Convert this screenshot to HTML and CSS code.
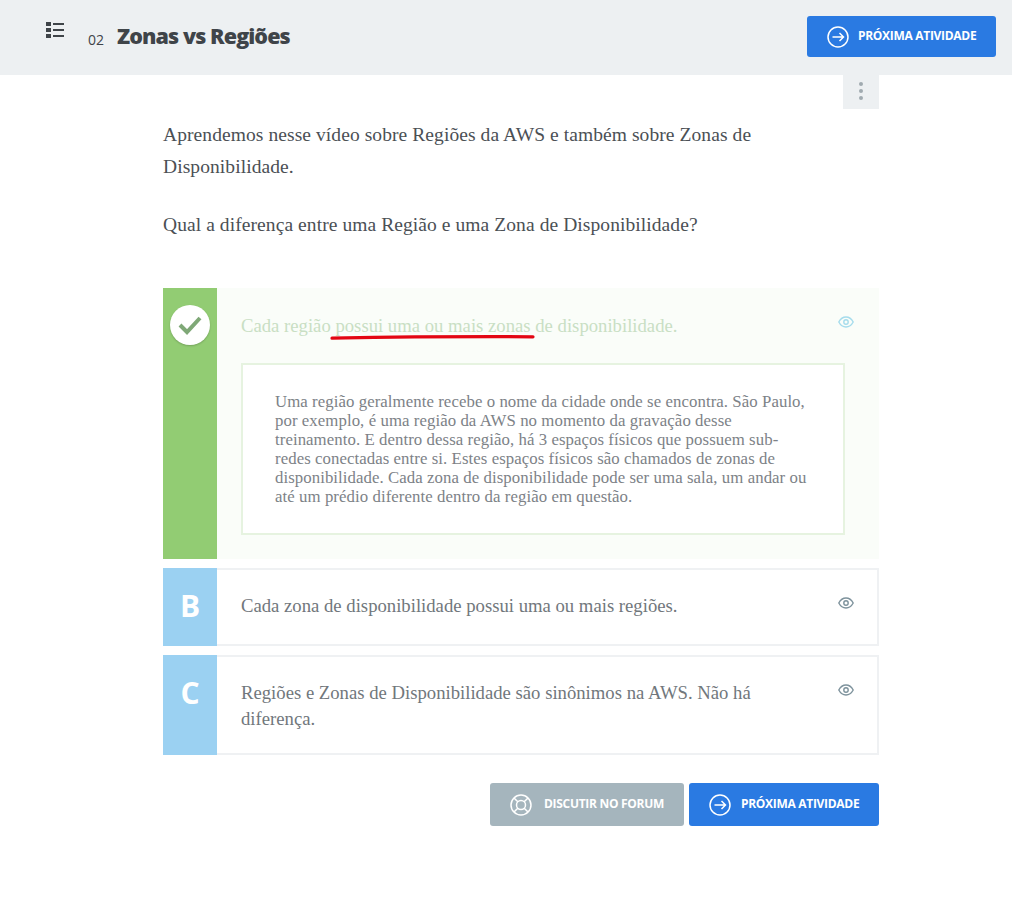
FILE: index.html
```html
<!DOCTYPE html>
<html lang="pt-BR">
<head>
  <meta charset="UTF-8">
  <title>Zonas vs Regiões</title>
  <link rel="stylesheet" href="styles.css">
</head>
<body>

  <header class="topbar">
    <svg class="list-icon" width="18" height="16" viewBox="0 0 18 16">
      <rect x="0" y="0" width="5" height="4" fill="#3f4449"/>
      <rect x="0" y="6" width="5" height="4" fill="#3f4449"/>
      <rect x="0" y="12" width="5" height="4" fill="#3f4449"/>
      <rect x="7" y="1" width="11" height="2" fill="#3f4449"/>
      <rect x="7" y="7" width="11" height="2" fill="#3f4449"/>
      <rect x="7" y="13" width="11" height="2" fill="#3f4449"/>
    </svg>
    <span class="task-number">02</span>
    <h1 class="task-title">Zonas vs Regiões</h1>
    <a class="btn btn-blue btn-top">
      <svg class="btn-icon" width="22" height="22" viewBox="0 0 22 22" fill="none" stroke="#fff" stroke-width="1.5">
        <circle cx="11" cy="11" r="10"/>
        <path d="M5.500 11h11M12.500 7l4 4-4 4"/>
      </svg>
      <span>PRÓXIMA ATIVIDADE</span>
    </a>
  </header>

  <main class="content">
    <div class="tools">
      <div class="kebab"><i></i><i></i><i></i></div>
    </div>

    <p class="intro">Aprendemos nesse vídeo sobre Regiões da AWS e também sobre Zonas de Disponibilidade.</p>
    <p class="intro question">Qual a diferença entre uma Região e uma Zona de Disponibilidade?</p>

    <div class="option option-right">
      <div class="option-letter">
        <span class="check">
          <svg width="24" height="20" viewBox="0 0 24 20" fill="none" stroke="#7fa877" stroke-width="4">
            <path d="M2 10l7 7L22 3"/>
          </svg>
        </span>
      </div>
      <div class="option-body">
        <div class="option-head">
          <p class="option-text">Cada região possui uma ou mais zonas de disponibilidade.</p>
          <svg class="eye" width="16" height="12" viewBox="0 0 16 12" fill="none" stroke="#a5dcec" stroke-width="1.4">
            <path d="M.8 6C2.500 2.800 5 1 8 1s5.500 1.800 7.200 5C13.500 9.200 11 11 8 11S2.500 9.200.8 6z"/>
            <circle cx="8" cy="6" r="2.200"/>
          </svg>
        </div>
        <svg class="underline" width="206" height="6" viewBox="0 0 206 6">
          <path d="M2 4.200C70 3 140 2.500 203 2.800" fill="none" stroke="#e30613" stroke-width="3.200" stroke-linecap="round"/>
        </svg>
        <div class="explanation">
          Uma região geralmente recebe o nome da cidade onde se encontra. São Paulo, por exemplo, é uma região da AWS no momento da gravação desse treinamento. E dentro dessa região, há 3 espaços físicos que possuem sub-redes conectadas entre si. Estes espaços físicos são chamados de zonas de disponibilidade. Cada zona de disponibilidade pode ser uma sala, um andar ou até um prédio diferente dentro da região em questão.
        </div>
      </div>
    </div>

    <div class="option">
      <div class="option-letter">B</div>
      <div class="option-body">
        <div class="option-head">
          <p class="option-text">Cada zona de disponibilidade possui uma ou mais regiões.</p>
          <svg class="eye" width="16" height="12" viewBox="0 0 16 12" fill="none" stroke="#7d929c" stroke-width="1.4">
            <path d="M.8 6C2.500 2.800 5 1 8 1s5.500 1.800 7.200 5C13.500 9.200 11 11 8 11S2.500 9.200.8 6z"/>
            <circle cx="8" cy="6" r="2.200"/>
          </svg>
        </div>
      </div>
    </div>

    <div class="option option-tall">
      <div class="option-letter">C</div>
      <div class="option-body">
        <div class="option-head">
          <p class="option-text">Regiões e Zonas de Disponibilidade são sinônimos na AWS. Não há diferença.</p>
          <svg class="eye" width="16" height="12" viewBox="0 0 16 12" fill="none" stroke="#7d929c" stroke-width="1.4">
            <path d="M.8 6C2.500 2.800 5 1 8 1s5.500 1.800 7.200 5C13.500 9.200 11 11 8 11S2.500 9.200.8 6z"/>
            <circle cx="8" cy="6" r="2.200"/>
          </svg>
        </div>
      </div>
    </div>

    <div class="actions">
      <a class="btn btn-gray">
        <svg class="btn-icon" width="22" height="22" viewBox="0 0 22 22" fill="none" stroke="#fff" stroke-width="1.5">
          <circle cx="11" cy="11" r="10"/>
          <circle cx="11" cy="11" r="4.500"/>
          <path d="M4 4l3.800 3.800M18 4l-3.800 3.800M4 18l3.800-3.800M18 18l-3.800-3.800"/>
        </svg>
        <span>DISCUTIR NO FORUM</span>
      </a>
      <a class="btn btn-blue">
        <svg class="btn-icon" width="22" height="22" viewBox="0 0 22 22" fill="none" stroke="#fff" stroke-width="1.5">
          <circle cx="11" cy="11" r="10"/>
          <path d="M5.500 11h11M12.500 7l4 4-4 4"/>
        </svg>
        <span>PRÓXIMA ATIVIDADE</span>
      </a>
    </div>
  </main>

</body>
</html>
```

FILE: styles.css
```css
* {
  box-sizing: border-box;
}

body {
  margin: 0;
  background: #fff;
  font-family: "Liberation Serif", serif;
  color: #4b5055;
}

.topbar {
  display: flex;
  align-items: flex-start;
  height: 75px;
  padding: 16px 16px 0 46px;
  background: #edf0f2;
}

.list-icon {
  margin-top: 6px;
}

.task-number {
  margin: 14px 0 0 24px;
  font: 14px "Open Sans", sans-serif;
  color: #3f4449;
}

.task-title {
  margin: 5px 0 0 13px;
  font: 800 21.500px "Open Sans", sans-serif;
  letter-spacing: -0.9px;
  color: #3f4449;
}

.btn {
  display: flex;
  align-items: center;
  font: 700 12px "Open Sans", sans-serif;
  letter-spacing: -0.3px;
  color: #fff;
  border-radius: 3px;
}

.btn span {
  padding-bottom: 2px;
}

.btn-icon {
  margin-right: 10px;
}

.btn-blue {
  background: #2a7ae2;
}

.btn-gray {
  width: 194px;
  background: #a5b5bd;
}

.btn-gray .btn-icon {
  margin-right: 12px;
}

.btn-top {
  width: 189px;
  height: 41px;
  margin-left: auto;
  padding-left: 20px;
}

.btn-top .btn-icon {
  margin-right: 9px;
}

.content {
  width: 716px;
  margin-left: 163px;
}

.tools {
  display: flex;
  justify-content: flex-end;
}

.kebab {
  display: flex;
  flex-direction: column;
  align-items: center;
  gap: 3px;
  width: 36px;
  height: 34px;
  padding-top: 7px;
  background: #edf0f2;
}

.kebab i {
  width: 4px;
  height: 4px;
  border-radius: 50%;
  background: #a0aab0;
}

.intro {
  max-width: 700px;
  margin: 10px 0 0;
  font-size: 19.500px;
  letter-spacing: 0.08px;
  line-height: 32px;
}

.question {
  margin-top: 26px;
}

.option {
  display: flex;
  min-height: 78px;
  margin-top: 9px;
}

.option-right {
  min-height: 271px;
  margin-top: 47px;
}

.option-tall {
  min-height: 100px;
}

.option-letter {
  flex: 0 0 54px;
  padding-top: 18px;
  background: #9bd1f2;
  font: 700 30px/40px "Open Sans", sans-serif;
  color: #fff;
  text-align: center;
}

.option-right .option-letter {
  padding-top: 17px;
  background: #92cc73;
}

.check {
  display: flex;
  align-items: center;
  justify-content: center;
  width: 40px;
  height: 40px;
  margin: 0 auto;
  border-radius: 50%;
  background: #fff;
  box-shadow: 0 1px 2px rgba(0,0,0,0.2);
}

.option-body {
  position: relative;
  flex: 1;
  padding: 23px 23px 0 24px;
  border: 2px solid #eff1f3;
  border-left: 0;
}

.option-right .option-body {
  padding: 25px 25px 0 24px;
  background: #fafdf9;
  border: 0;
}

.option-head {
  display: flex;
  justify-content: space-between;
  align-items: flex-start;
}

.option-text {
  width: 540px;
  margin: 0;
  font-size: 18.700px;
  line-height: 26px;
  color: #71777c;
}

.option-right .option-text {
  color: #c9dfc4;
}

.eye {
  margin: 4px 0 0;
  flex: none;
}

.option-right .eye {
  margin-top: 3px;
}

.underline {
  position: absolute;
  left: 113px;
  top: 46px;
}

.explanation {
  margin-top: 24px;
  padding: 27px 32px 0;
  width: 604px;
  height: 172px;
  border: 2px solid #e6f3e0;
  background: #fff;
  font-size: 16.800px;
  letter-spacing: 0.07px;
  line-height: 19px;
  color: #7d8287;
}

.actions {
  display: flex;
  justify-content: flex-end;
  gap: 5px;
  margin-top: 28px;
}

.actions .btn {
  height: 43px;
  padding-left: 20px;
}

.actions .btn-blue {
  width: 190px;
}
```
